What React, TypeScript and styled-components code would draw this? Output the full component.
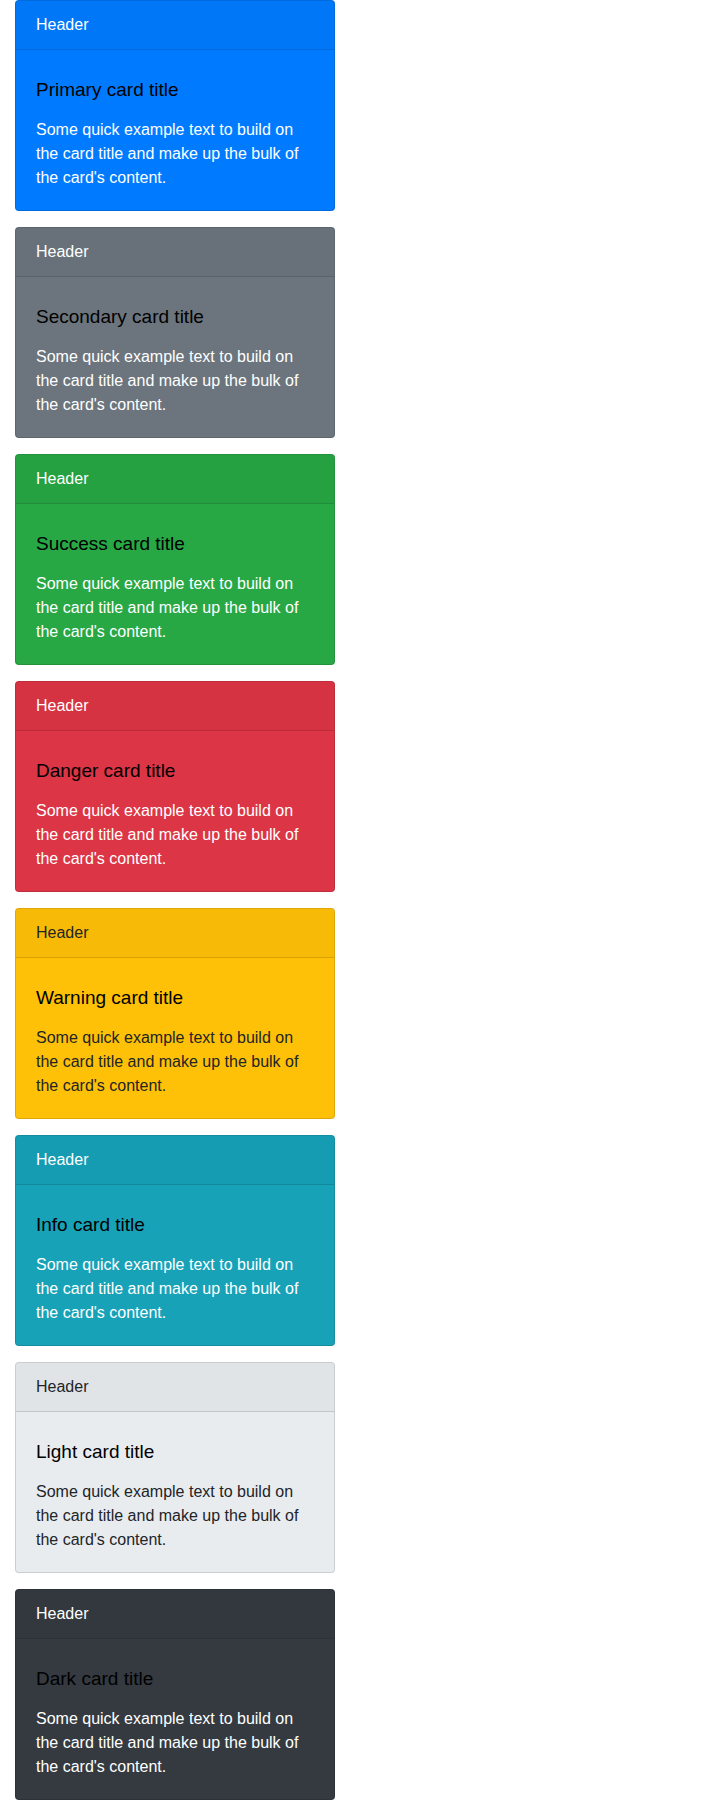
import React from "react";
import styled, { createGlobalStyle } from "styled-components";

const GlobalStyle = createGlobalStyle`
  html, body { margin: 0; padding: 0; background: #fff; }
  body {
    font-family: "Liberation Sans", Arial, sans-serif;
    font-size: 16px;
    line-height: 1.5;
    color: #212529;
  }
  * { box-sizing: border-box; }
`;

type Variant = { name: string; bg: string; fg: string };

const variants: Variant[] = [
  { name: "Primary", bg: "#007bff", fg: "#ffffff" },
  { name: "Secondary", bg: "#6c757d", fg: "#ffffff" },
  { name: "Success", bg: "#28a745", fg: "#ffffff" },
  { name: "Danger", bg: "#dc3545", fg: "#ffffff" },
  { name: "Warning", bg: "#ffc107", fg: "#212529" },
  { name: "Info", bg: "#17a2b8", fg: "#ffffff" },
  { name: "Light", bg: "#e9ecef", fg: "#212529" },
  { name: "Dark", bg: "#343a40", fg: "#ffffff" },
];

const Page = styled.div`
  display: flex;
  flex-direction: column;
  gap: 16px;
  padding: 0 0 0 15px;
`;

const Card = styled.div<{ $bg: string; $fg: string }>`
  width: 320px;
  display: flex;
  flex-direction: column;
  background: ${(p) => p.$bg};
  color: ${(p) => p.$fg};
  border: 1px solid rgba(0, 0, 0, 0.125);
  border-radius: 4px;
  overflow: hidden;
`;

const CardHeader = styled.div`
  padding: 12px 20px;
  line-height: 24px;
  background: rgba(0, 0, 0, 0.03);
  border-bottom: 1px solid rgba(0, 0, 0, 0.125);
`;

const CardBody = styled.div`
  padding: 20px;
`;

const CardTitle = styled.h5`
  margin: 8px 0 16px;
  font-size: 19px;
  font-weight: 400;
  line-height: 24px;
  color: #000;
`;

const CardText = styled.p`
  margin: 0;
  line-height: 24px;
`;

export default function App() {
  return (
    <>
      <GlobalStyle />
      <Page>
        {variants.map((v) => (
          <Card key={v.name} $bg={v.bg} $fg={v.fg}>
            <CardHeader>Header</CardHeader>
            <CardBody>
              <CardTitle>{v.name} card title</CardTitle>
              <CardText>
                Some quick example text to build on the card title and make up
                the bulk of the card's content.
              </CardText>
            </CardBody>
          </Card>
        ))}
      </Page>
    </>
  );
}
